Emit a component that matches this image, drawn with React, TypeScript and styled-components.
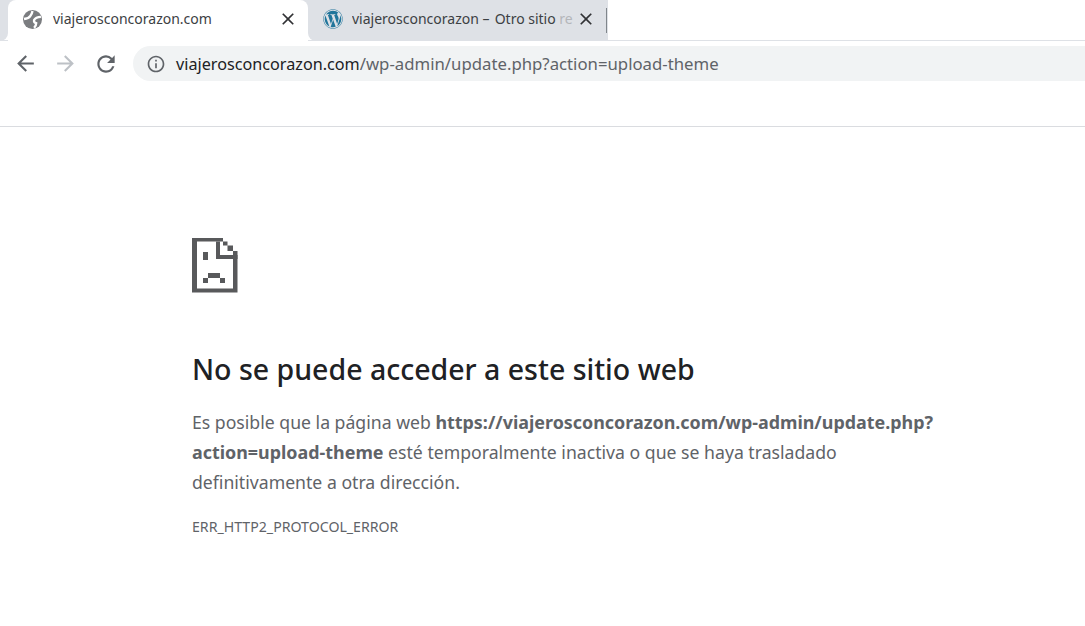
import React from 'react';
import styled, { createGlobalStyle } from 'styled-components';
import { MdArrowBack, MdArrowForward, MdClose, MdInfoOutline, MdRefresh } from 'react-icons/md';
import { FaWordpress } from 'react-icons/fa';

const GlobalStyle = createGlobalStyle`
  html, body {
    margin: 0;
    padding: 0;
    background: #fff;
    overflow: hidden;
  }
  body {
    font-family: "Noto Sans", "Open Sans", "Liberation Sans", sans-serif;
  }
`;

const Page = styled.div`
  width: 1085px;
  height: 626px;
  display: flex;
  flex-direction: column;
`;

const TabStrip = styled.div`
  height: 41px;
  display: flex;
  box-sizing: border-box;
  border-bottom: 1px solid #dee1e6;
`;

const StripEdge = styled.div`
  width: 8px;
  height: 41px;
  background: #dee1e6;
  border-bottom-right-radius: 8px;
`;

const TabSlot = styled.div`
  width: 300px;
  height: 41px;
  background: #dee1e6;
`;

const Tab = styled.div<{ $active?: boolean }>`
  width: 300px;
  height: 41px;
  display: flex;
  align-items: center;
  box-sizing: border-box;
  padding: 0 ${p => (p.$active ? '10px' : '0')} 3px 15px;
  background: ${p => (p.$active ? '#fff' : '#dee1e6')};
  border-radius: ${p => (p.$active ? '8px 8px 0 0' : '0 0 0 8px')};
`;

const TabTitle = styled.span`
  flex: 1;
  margin: 0 0 1px 9px;
  font-size: 14px;
  color: #3c4043;
  white-space: nowrap;
  overflow: hidden;
`;

const Dash = styled.span`
  letter-spacing: 1.5px;
`;

const Fade = styled.span`
  color: #b4b6ba;
`;

const TabClose = styled(MdClose)`
  font-size: 20px;
  color: #303134;
  flex: none;
`;

const Divider = styled.div`
  width: 1px;
  height: 25px;
  margin: 3px 1px 0 10px;
  flex: none;
  background: #80868b;
`;

const GlobeIcon = styled.svg`
  width: 19px;
  height: 19px;
  flex: none;
  margin-right: 2px;
`;

const Toolbar = styled.div`
  height: 40px;
  margin-top: 5px;
  display: flex;
  align-items: flex-start;
  padding-left: 13px;
`;

const NavButton = styled.div<{ $disabled?: boolean }>`
  width: 40px;
  height: 35px;
  display: flex;
  align-items: center;
  font-size: 25px;
  color: ${p => (p.$disabled ? '#bdc1c6' : '#5f6368')};
`;

const ReloadIcon = styled(MdRefresh)`
  font-size: 26px;
`;

const Omnibox = styled.div`
  flex: 1;
  height: 35px;
  display: flex;
  align-items: center;
  padding-left: 13px;
  background: #f1f3f4;
  border-radius: 18px 0 0 18px;
`;

const InfoIcon = styled(MdInfoOutline)`
  font-size: 20px;
  color: #5f6368;
  margin-right: 10px;
`;

const Url = styled.span`
  font-size: 16.75px;
  color: #5f6368;
`;

const Host = styled.span`
  font-size: 16.2px;
  color: #202124;
`;

const BookmarkArea = styled.div`
  height: 40px;
  border-bottom: 1px solid #dadce0;
`;

const Content = styled.main`
  flex: 1;
  padding: 111px 0 0 192px;
  width: 760px;
`;

const SadIcon = styled.svg`
  display: block;
  width: 46px;
  height: 55px;
`;

const Heading = styled.h1`
  margin: 56px 0 0;
  font-size: 28.5px;
  line-height: 40px;
  font-weight: 500;
  color: #202124;
`;

const Message = styled.p`
  margin: 18px 0 0;
  font-size: 17.65px;
  line-height: 30px;
  color: #5f6368;

  strong {
    font-size: 17.9px;
  }
`;

const ErrorCode = styled.div`
  margin-top: 20px;
  font-size: 14.15px;
  line-height: 20px;
  color: #5f6368;
`;

const SadTabIcon = () => (
  <SadIcon viewBox="0 0 46 55" fill="#58595b">
    {/* outer frame */}
    <path d="M0 0H31V3.5H5V50.5H41V17H45.5V54.5H0Z" />
    {/* folded corner */}
    <path d="M24 3.5H28V17H45.5V21H24Z" />
    <path d="M31 3.5H35.5V7.5H41V13H45.5V17H41V13H35.5V7.5H31Z" />
    {/* eye and mouth */}
    <rect x="11" y="14" width="5" height="8" />
    <path d="M16 35H28V40H33V45H28V40H16V45H11V40H16Z" />
  </SadIcon>
);

const Globe = () => (
  <GlobeIcon viewBox="0 0 18 18">
    <circle cx="9" cy="9" r="9" fill="#7b7d80" />
    <g fill="none" stroke="#fff" strokeWidth="2.2">
      <path d="M1 8.5Q5.5 8 7 5.5Q8.5 4 9 1" />
      <path d="M17 6.5Q12 6.5 10.5 9.5Q10 12 12.5 12.5Q12.5 15 10.5 17" />
    </g>
  </GlobeIcon>
);

const App = () => (
  <Page>
    <GlobalStyle />
    <TabStrip>
      <StripEdge />
      <TabSlot>
        <Tab $active>
          <Globe />
          <TabTitle>viajerosconcorazon.com</TabTitle>
          <TabClose />
        </Tab>
      </TabSlot>
      <Tab>
        <FaWordpress size={20} color="#21759b" />
        <TabTitle>viajerosconcorazon <Dash>–</Dash> Otro sitio <Fade>re</Fade></TabTitle>
        <TabClose />
        <Divider />
      </Tab>
    </TabStrip>
    <Toolbar>
      <NavButton><MdArrowBack /></NavButton>
      <NavButton $disabled><MdArrowForward /></NavButton>
      <NavButton><ReloadIcon /></NavButton>
      <Omnibox>
        <InfoIcon />
        <Url><Host>viajerosconcorazon.com</Host>/wp-admin/update.php?action=upload-theme</Url>
      </Omnibox>
    </Toolbar>
    <BookmarkArea />
    <Content>
      <SadTabIcon />
      <Heading>No se puede acceder a este sitio web</Heading>
      <Message>
        Es posible que la página web <strong>https://viajerosconcorazon.com/wp-admin/update.php?</strong><br />
        <strong>action=upload-theme</strong> esté temporalmente inactiva o que se haya trasladado<br />
        definitivamente a otra dirección.
      </Message>
      <ErrorCode>ERR_HTTP2_PROTOCOL_ERROR</ErrorCode>
    </Content>
  </Page>
);

export default App;
